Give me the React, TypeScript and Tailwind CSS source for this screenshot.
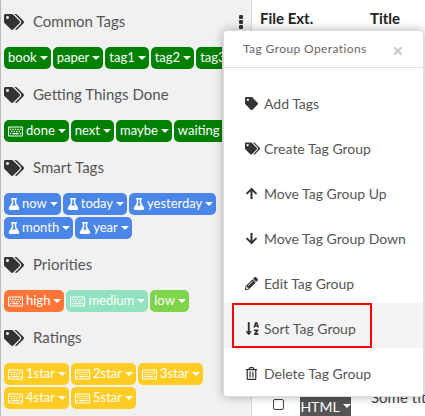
import React from 'react';
import { FaArrowDown, FaArrowUp, FaFlask, FaPencilAlt, FaRegKeyboard, FaRegTrashAlt, FaSortAlphaDown, FaTag, FaTags, FaTimes } from 'react-icons/fa';

const Caret = () => (
  <svg width="8" height="4" viewBox="0 0 8 4" className="ml-[3px] fill-white"><path d="M0 0H8L4 4Z" /></svg>
);

type TagProps = { label: string; color: string; icon?: 'key' | 'flask' };

const Tag = ({ label, color, icon }: TagProps) => (
  <span className={`inline-flex items-center h-[22px] shrink-0 rounded-[5px] pl-[4px] pr-[3px] text-white text-[13px] ${color}`}>
    {icon === 'key' && <FaRegKeyboard size={15} className="mr-[3px]" />}
    {icon === 'flask' && <FaFlask size={12} className="mr-[2px]" />}
    {label}
    <Caret />
  </span>
);

const Group = ({ title, first, children }: { title: string; first?: boolean; children: React.ReactNode }) => (
  <div>
    <div className={`flex items-center h-[49px] pl-[3px] text-[#333] ${first ? '-mt-[3px]' : ''}`}>
      <FaTags size={20} />
      <span className="ml-[9px] text-[15px] text-[#555]">{title}</span>
    </div>
    {children}
  </div>
);

const Row = ({ children }: { children: React.ReactNode }) => (
  <div className="flex gap-[2px] py-[1px] pl-[3px] whitespace-nowrap">{children}</div>
);

const items = [
  { label: 'Add Tags', icon: <FaTag size={13} /> },
  { label: 'Create Tag Group', icon: <FaTags size={15} /> },
  { label: 'Move Tag Group Up', icon: <FaArrowUp size={13} /> },
  { label: 'Move Tag Group Down', icon: <FaArrowDown size={13} /> },
  { label: 'Edit Tag Group', icon: <FaPencilAlt size={13} /> },
  { label: 'Sort Tag Group', icon: <FaSortAlphaDown size={15} /> },
  { label: 'Delete Tag Group', icon: <FaRegTrashAlt size={13} /> },
];

export default function App() {
  return (
    <div className="relative flex w-[425px] h-[416px] overflow-hidden bg-white font-['Lato',sans-serif]">
      {/* Tag library */}
      <div className="w-[222px] shrink-0 overflow-hidden border-l border-[#bbb] bg-[#f1f1f1]">
        <Group title="Common Tags" first>
          <Row>
            {['book', 'paper', 'tag1', 'tag2', 'tag3'].map((t) => <Tag key={t} label={t} color="bg-[#008000]" />)}
          </Row>
        </Group>
        <Group title="Getting Things Done">
          <Row>
            <Tag label="done" color="bg-[#008000]" icon="key" />
            {['next', 'maybe', 'waiting'].map((t) => <Tag key={t} label={t} color="bg-[#008000]" />)}
          </Row>
        </Group>
        <Group title="Smart Tags">
          <Row>
            {['now', 'today', 'yesterday'].map((t) => <Tag key={t} label={t} color="bg-[#4a86e8]" icon="flask" />)}
          </Row>
          <Row>
            {['month', 'year'].map((t) => <Tag key={t} label={t} color="bg-[#4a86e8]" icon="flask" />)}
          </Row>
        </Group>
        <Group title="Priorities">
          <Row>
            <Tag label="high" color="bg-[#ff7537]" icon="key" />
            <Tag label="medium" color="bg-[#93e2bf]" icon="key" />
            <Tag label="low" color="bg-[#7ed44a]" />
          </Row>
        </Group>
        <Group title="Ratings">
          <Row>
            {['1star', '2star', '3star'].map((t) => <Tag key={t} label={t} color="bg-[#ffcc24]" icon="key" />)}
          </Row>
          <Row>
            {['4star', '5star'].map((t) => <Tag key={t} label={t} color="bg-[#ffcc24]" icon="key" />)}
          </Row>
        </Group>
      </div>

      {/* Kebab */}
      <div className="flex w-[30px] shrink-0 flex-col items-end gap-[1px] border-r border-[#ddd] bg-[#f1f1f1] pr-[8px] pt-[15px]">
        <span className="size-[4px] rounded-[1px] bg-[#333]" />
        <span className="size-[4px] rounded-[1px] bg-[#333]" />
        <span className="size-[4px] rounded-[1px] bg-[#333]" />
      </div>

      {/* File list */}
      <div className="relative flex-1">
        <div className="flex pt-[7px] text-[15px] font-bold text-[#222]">
          <span className="ml-[8px] w-[110px]">File Ext.</span>
          <span>Title</span>
        </div>
        <div className="absolute left-[21px] top-[386px] flex items-start whitespace-nowrap">
          <span className="mt-[13px] size-[11px] rounded-[2px] border border-[#444] bg-white" />
          <span className="ml-[16px] mt-[10px] flex h-[20px] w-[51px] items-center justify-center bg-[#555] text-[14px] text-white">
            HTML
            <Caret />
          </span>
          <span className="ml-[20px] text-[15px] text-[#444]">Some title</span>
        </div>
      </div>

      {/* Tag group menu */}
      <div className="absolute left-[223px] top-[30px] h-[367px] w-[201px] rounded-[4px] border border-[#ddd] bg-white shadow-[0_0_10px_rgba(0,0,0,0.3)]">
        <div className="flex h-[37px] items-center justify-between border-b border-[#e0e0e0] pl-[19px] pr-[19px]">
          <span className="text-[12px] tracking-[0.4px] text-[#666]">Tag Group Operations</span>
          <FaTimes size={12} className="mt-[4px] text-[#ccc]" />
        </div>
        <div className="pt-[10px]">
          {items.map((item) => (
            <div key={item.label} className={`flex h-[45px] items-center pl-[21px] pt-[6px] text-[14px] text-[#555] ${item.label === 'Sort Tag Group' ? 'bg-[#f4f4f4]' : ''}`}>
              <span className="flex w-[19px] shrink-0 text-[#333]">{item.icon}</span>
              {item.label}
            </div>
          ))}
        </div>
        <div className="absolute left-[8px] top-[272px] h-[45px] w-[140px] border-2 border-[#f00]" />
      </div>
    </div>
  );
}
